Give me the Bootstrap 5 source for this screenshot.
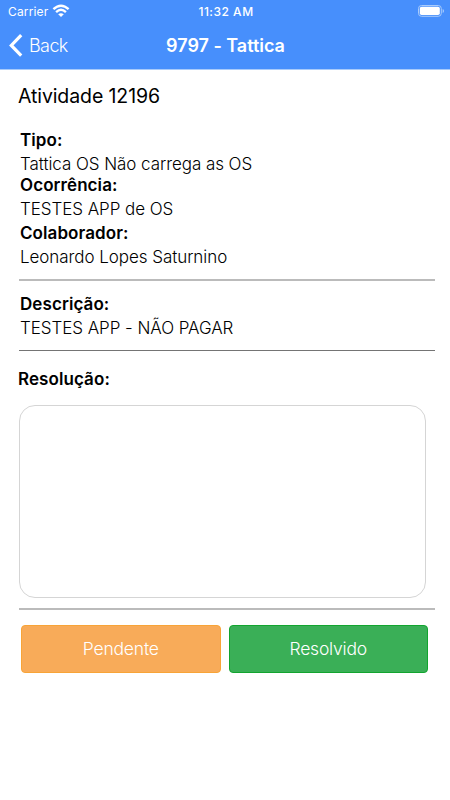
<!DOCTYPE html>
<html lang="pt-BR">
<head>
<meta charset="utf-8">
<meta name="viewport" content="width=device-width, initial-scale=1">
<title>Atividade</title>
<link href="https://cdn.jsdelivr.net/npm/bootstrap@5.3.0/dist/css/bootstrap.min.css" rel="stylesheet">
<style>
body{font-family:Inter,"Liberation Sans",sans-serif;font-size:17px;line-height:24px;color:#000;height:800px;overflow:hidden}
.app-head{background:#478ffc;height:69px;border-bottom:1px solid #a9cbfb;box-sizing:content-box}
.status-line{height:22px;font-size:12px;line-height:23px;padding:0 6px 0 8px}
.nav-line{height:47px;font-size:18px;padding:0 8px 0 9px}
.side{flex:1 1 0}
.carrier{letter-spacing:.15px}
.clock{font-weight:500;letter-spacing:.5px}
.back{font-weight:300;font-size:18px;letter-spacing:-.6px;padding-left:6px}
.page-name{font-weight:600;letter-spacing:-.02px}
.light{font-weight:300;letter-spacing:-.06px}
.label-text{font-weight:600;letter-spacing:.08px}
.heading{font-size:19.5px;line-height:26px;letter-spacing:-.1px;margin:13px 0 0 18px}
.details{padding:19px 0 0 20px}
.description{padding:11px 0 10px 20px}
.pull{margin-top:-3px}
.rule{height:2px;background:#bbb;margin:0 15px 0 19px}
.rule.thin{height:1px;background:#747474}
.gap-top{margin-top:10px}
.answer-label{margin:16px 0 0 18px}
.answer{margin:14px 24px 0 19px;height:193px;width:calc(100% - 43px);border:1px solid #d5d5d5;border-radius:16px;resize:none;display:block}
.actions{padding:0 22px 0 21px;margin-top:15px}
.actions .btn{height:48px;border-radius:4px;font-size:17.5px;font-weight:300;letter-spacing:-.2px;color:#fff;padding:0;flex:1 1 0}
.btn-wait{background:#f8ab59;border-color:#f8a437}
.btn-ok{background:#3aaf57;border-color:#12a52f}
</style>
</head>
<body class="bg-white">
<header class="app-head text-white">
  <div class="status-line d-flex">
    <div class="side d-flex align-items-center"><span class="carrier">Carrier</span>
      <svg class="ms-1" width="18" height="14" viewBox="0 0 18 14" fill="none" stroke="#fff" stroke-width="2.4"><path d="M1.4 5.2Q9-1.7 16.6 5.2M4.1 8.1Q9 3.6 13.9 8.1"/><path d="M9 13 6.2 10.3Q9 8 11.8 10.3Z" fill="#fff" stroke="none"/></svg>
    </div>
    <span class="clock">11:32 AM</span>
    <div class="side d-flex justify-content-end align-items-center">
      <svg width="27" height="12" viewBox="0 0 27 12"><rect x="1.5" y=".5" width="22.8" height="10.8" rx="3" fill="none" stroke="#a9cbfb"/><rect x="2.8" y="1.8" width="20" height="8.2" rx="1.8" fill="#fff"/><path d="M25.7 4v4q1.3-.5 1.3-2t-1.3-2Z" fill="#a9cbfb"/></svg>
    </div>
  </div>
  <nav class="nav-line d-flex align-items-center">
    <div class="side d-flex align-items-center">
      <svg width="14" height="24" viewBox="0 0 14 24" fill="none" stroke="#fff" stroke-width="3.2"><path d="M12.2 1.2 2.3 11.4 12.2 21.6"/></svg>
      <span class="back">Back</span>
    </div>
    <span class="page-name">9797 - Tattica</span>
    <div class="side"></div>
  </nav>
</header>
<main>
  <h1 class="heading fw-normal">Atividade 12196</h1>
  <dl class="m-0 details">
    <dt class="label-text">Tipo:</dt><dd class="m-0 light">Tattica OS Não carrega as OS</dd>
    <dt class="label-text pull">Ocorrência:</dt><dd class="m-0 light">TESTES APP de OS</dd>
    <dt class="label-text">Colaborador:</dt><dd class="m-0 light">Leonardo Lopes Saturnino</dd>
  </dl>
  <div class="rule gap-top"></div>
  <dl class="m-0 description">
    <dt class="label-text">Descrição:</dt><dd class="m-0 light">TESTES APP - NÃO PAGAR</dd>
  </dl>
  <div class="rule thin"></div>
  <label for="res" class="d-block label-text answer-label">Resolução:</label>
  <textarea id="res" class="form-control answer"></textarea>
  <div class="rule gap-top"></div>
  <div class="actions d-flex gap-2">
    <button type="button" class="btn btn-wait">Pendente</button>
    <button type="button" class="btn btn-ok">Resolvido</button>
  </div>
</main>
</body>
</html>
